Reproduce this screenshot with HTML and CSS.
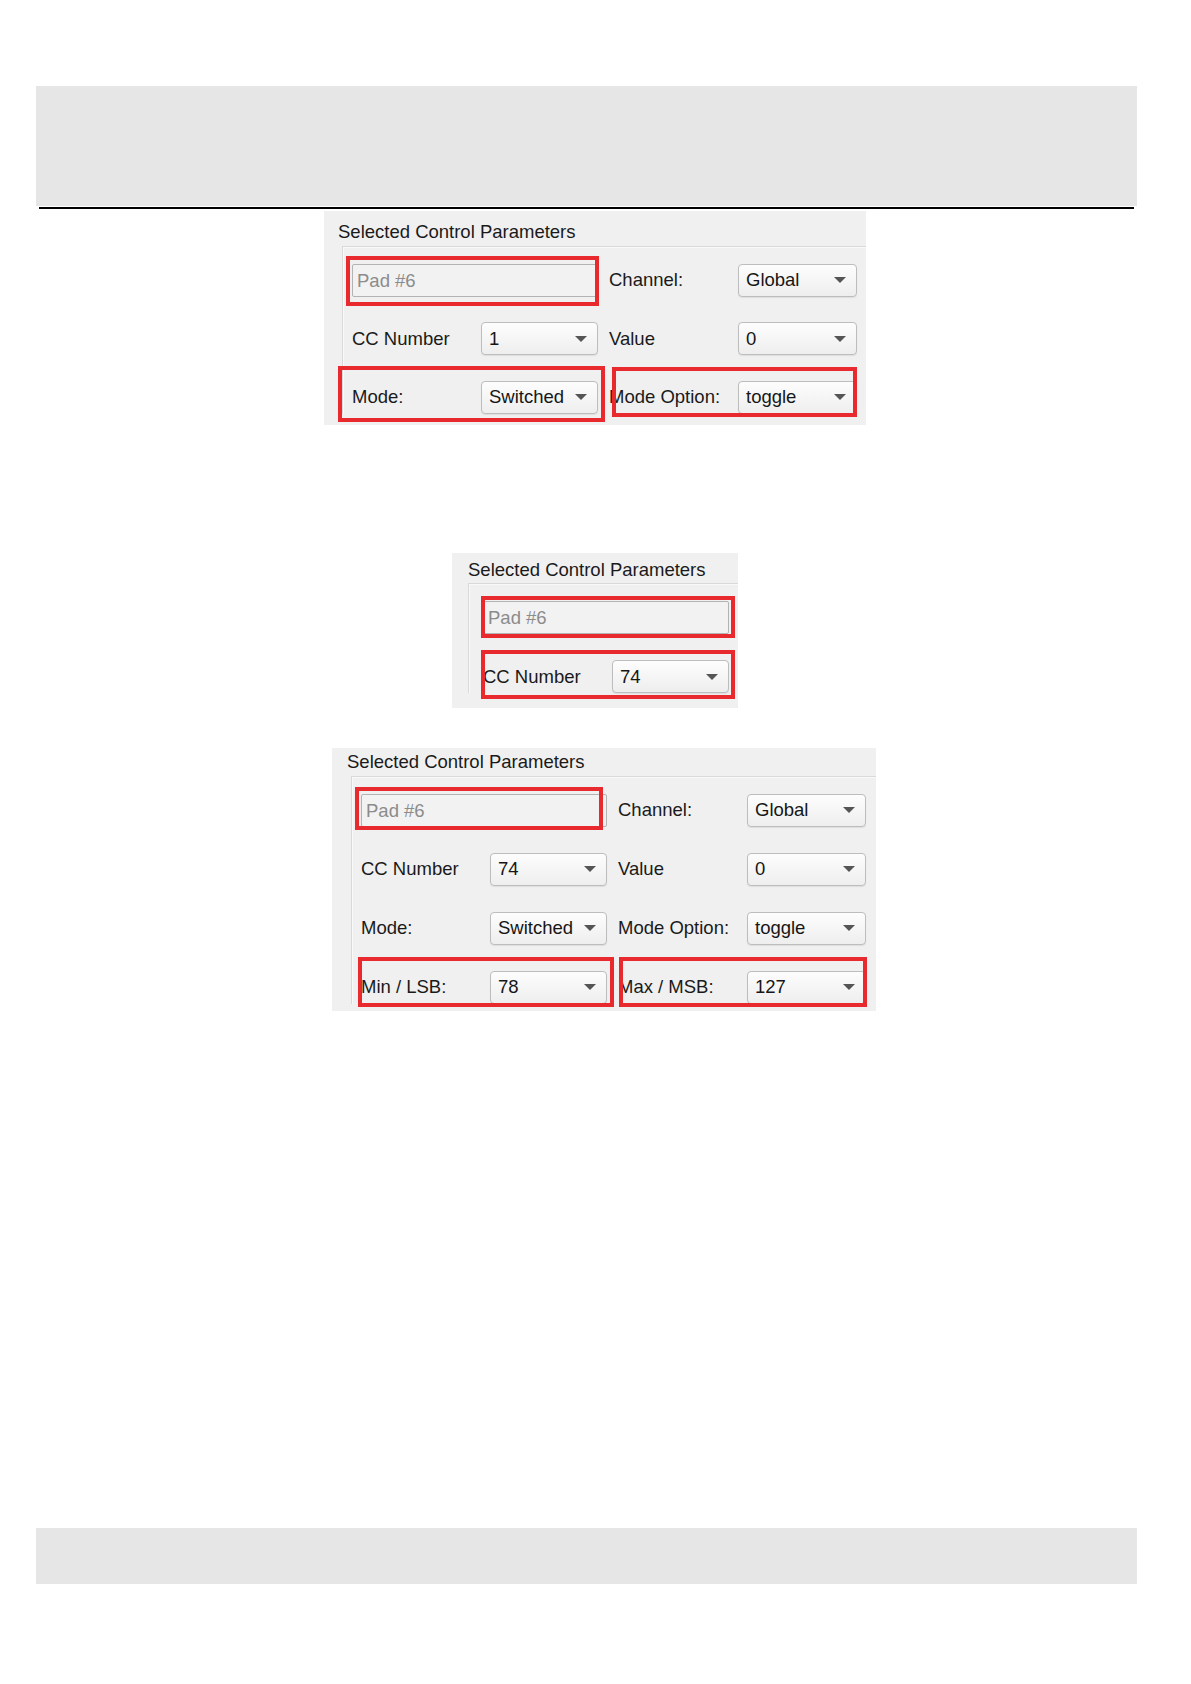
FILE: index.html
```html
<!DOCTYPE html>
<html>
<head>
    <title>Selected Control Parameters</title>
    <link rel="stylesheet" href="styles.css">
</head>
<body>
    <div class="page-head"></div>
    <div class="page-rule"></div>

    <!-- full pad view -->
    <div class="panel panel-one">
        <div class="panel-title">Selected Control Parameters</div>
        <div class="group">
            <div class="fields">
                <div class="text-field">Pad #6</div>
                <div class="label">Channel:</div>
                <div class="select"><span>Global</span><i class="caret"></i></div>

                <div class="label">CC Number</div>
                <div class="select"><span>1</span><i class="caret"></i></div>
                <div class="label">Value</div>
                <div class="select"><span>0</span><i class="caret"></i></div>

                <div class="label">Mode:</div>
                <div class="select"><span>Switched</span><i class="caret"></i></div>
                <div class="label">Mode Option:</div>
                <div class="select"><span>toggle</span><i class="caret"></i></div>
            </div>
        </div>
        <div class="mark" style="left:22px;top:45px;width:253px;height:50px"></div>
        <div class="mark" style="left:14px;top:155px;width:267px;height:56px"></div>
        <div class="mark" style="left:288px;top:156px;width:245px;height:50px"></div>
    </div>

    <!-- short view -->
    <div class="panel panel-two">
        <div class="panel-title">Selected Control Parameters</div>
        <div class="group">
            <div class="fields fields-short">
                <div class="text-field">Pad #6</div>
                <div class="label">CC Number</div>
                <div class="select"><span>74</span><i class="caret"></i></div>
            </div>
        </div>
        <div class="mark" style="left:29px;top:43px;width:254px;height:42px"></div>
        <div class="mark" style="left:29px;top:97px;width:254px;height:49px"></div>
    </div>

    <!-- min / max view -->
    <div class="panel panel-three">
        <div class="panel-title">Selected Control Parameters</div>
        <div class="group">
            <div class="fields">
                <div class="text-field">Pad #6</div>
                <div class="label">Channel:</div>
                <div class="select"><span>Global</span><i class="caret"></i></div>

                <div class="label">CC Number</div>
                <div class="select"><span>74</span><i class="caret"></i></div>
                <div class="label">Value</div>
                <div class="select"><span>0</span><i class="caret"></i></div>

                <div class="label">Mode:</div>
                <div class="select"><span>Switched</span><i class="caret"></i></div>
                <div class="label">Mode Option:</div>
                <div class="select"><span>toggle</span><i class="caret"></i></div>

                <div class="label">Min / LSB:</div>
                <div class="select"><span>78</span><i class="caret"></i></div>
                <div class="label">Max / MSB:</div>
                <div class="select"><span>127</span><i class="caret"></i></div>
            </div>
        </div>
        <div class="mark" style="left:23px;top:39px;width:248px;height:43px"></div>
        <div class="mark" style="left:26px;top:209px;width:256px;height:50px"></div>
        <div class="mark" style="left:287px;top:209px;width:248px;height:50px"></div>
    </div>

    <div class="page-foot"></div>
</body>
</html>
```

FILE: styles.css
```css
body {
    margin: 0;
    background: #fff;
    font-family: "Liberation Sans", Arial, sans-serif;
    color: #1a1a1a;
}
.page-head {
    margin: 86px 54px 0 36px;
    height: 120px;
    background: #e6e6e6;
}
.page-rule {
    margin: 1px 57px 0 39px;
    height: 2px;
    background: #000;
}
.page-foot {
    margin: 517px 54px 0 36px;
    height: 56px;
    background: #e6e6e6;
}

.panel {
    position: relative;
    box-sizing: border-box;
    overflow: hidden;
    background: #f0f0f0;
}
.panel-one {
    margin: 2px 0 0 324px;
    width: 542px;
    height: 214px;
    padding-left: 14px;
}
.panel-two {
    margin: 128px 0 0 452px;
    width: 286px;
    height: 155px;
    padding-left: 16px;
}
.panel-three {
    margin: 40px 0 0 332px;
    width: 544px;
    height: 263px;
    padding-left: 15px;
}

.panel-title {
    font-size: 18.5px;
    line-height: 22px;
    color: #1a1a1a;
    white-space: nowrap;
}
.panel-one .panel-title { padding: 10px 0 3px; }
.panel-two .panel-title { padding: 5.5px 0 2.5px; }
.panel-three .panel-title { padding: 2.5px 0 3px; }

.group {
    border-top: 1px solid #d9d9d9;
    border-left: 1px solid #d9d9d9;
    box-shadow: inset 1px 1px 0 #f9f9f9;
    margin-left: 4px;
    padding-left: 9px;
    padding-top: 16.5px;
}
.panel-two .group {
    margin-left: 0;
    padding-left: 14px;
    padding-top: 17px;
}
.panel-three .group {
    padding-top: 17px;
}

.fields {
    display: grid;
    grid-template-columns: 118px 117px 118px 119px;
    grid-auto-rows: 33px;
    column-gap: 11px;
    row-gap: 25.5px;
    align-items: center;
}
.panel-two .fields,
.panel-three .fields {
    row-gap: 26px;
}
.fields-short {
    grid-template-columns: 118px 117px;
}

.label {
    font-size: 18.5px;
    color: #1a1a1a;
    white-space: nowrap;
}
.text-field {
    grid-column: span 2;
    height: 33px;
    box-sizing: border-box;
    padding-left: 4px;
    border: 1px solid #b3b3b3;
    border-radius: 2px;
    background: #f2f2f2;
    color: #8c8c8c;
    font-size: 18.5px;
    line-height: 31px;
}
.select {
    display: flex;
    align-items: center;
    justify-content: space-between;
    height: 33px;
    box-sizing: border-box;
    padding: 0 10px 0 7px;
    border: 1px solid #bdbdbd;
    border-radius: 4px;
    background: linear-gradient(#fdfdfd, #eeeeee);
    box-shadow: 0 1px 1px rgba(0,0,0,0.08);
    font-size: 18.5px;
    color: #161616;
    white-space: nowrap;
}
.caret {
    width: 0;
    height: 0;
    border-left: 6px solid transparent;
    border-right: 6px solid transparent;
    border-top: 6px solid #555;
}

.mark {
    position: absolute;
    box-sizing: border-box;
    border: 4px solid #e8292d;
}
```
